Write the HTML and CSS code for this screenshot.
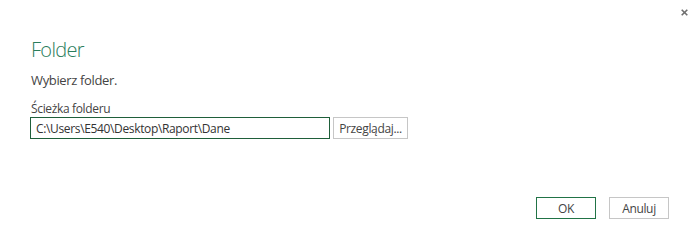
FILE: index.html
```html
<!DOCTYPE html>
<html lang="pl">
<head>
<meta charset="utf-8">
<title>Folder</title>
<link rel="stylesheet" href="styles.css">
</head>
<body>
<div class="dialog">
  <button class="close" aria-label="Zamknij">
    <svg width="7" height="7" viewBox="0 0 7 7"><path d="M0.7 0.7 L6.3 6.3 M6.3 0.7 L0.7 6.3" stroke="#6e6e6e" stroke-width="1.6" fill="none"/></svg>
  </button>
  <h1 class="title">Folder</h1>
  <p class="subtitle">Wybierz folder.</p>
  <label class="label" for="path">Ścieżka folderu</label>
  <div class="row">
    <input id="path" class="path" type="text" value="C:\Users\E540\Desktop\Raport\Dane">
    <button class="btn browse">Przeglądaj...</button>
  </div>
  <div class="footer">
    <button class="btn ok">OK</button>
    <button class="btn">Anuluj</button>
  </div>
</div>
</body>
</html>
```

FILE: styles.css
```css
html, body {
  margin: 0;
  padding: 0;
  background: #ffffff;
}
.dialog {
  position: relative;
  width: 700px;
  height: 250px;
  box-sizing: border-box;
  padding: 0 31px 31px 30px;
  display: flex;
  flex-direction: column;
  font-family: "Open Sans", "Noto Sans", sans-serif;
  color: #444444;
}
.close {
  position: absolute;
  top: 8px;
  right: 11px;
  width: 9px;
  height: 9px;
  padding: 1px;
  border: 0;
  background: transparent;
  display: flex;
  align-items: center;
  justify-content: center;
}
.title {
  margin: 37px 0 0 1px;
  font-size: 20px;
  line-height: 26px;
  font-weight: 300;
  letter-spacing: -0.7px;
  color: #2a7d5c;
}
.subtitle {
  margin: 8px 0 0 1px;
  font-size: 13px;
  line-height: 18px;
  letter-spacing: -0.35px;
  color: #444444;
}
.label {
  margin: 12px 0 0 1px;
  font-size: 12px;
  line-height: 16px;
  letter-spacing: -0.35px;
  color: #444444;
}
.row {
  margin-top: 0;
  display: flex;
  gap: 3px;
}
.path {
  width: 300px;
  height: 22px;
  box-sizing: border-box;
  border: 1px solid #1f5f3a;
  padding: 0 5px;
  font-family: inherit;
  font-size: 12px;
  letter-spacing: -0.35px;
  color: #333333;
  outline: none;
}
.btn {
  height: 22px;
  box-sizing: border-box;
  border: 1px solid #c6c6c6;
  background: #ffffff;
  font-family: inherit;
  font-size: 12px;
  letter-spacing: -0.35px;
  color: #444444;
  padding: 0;
}
.browse {
  width: 75px;
}
.footer {
  margin-top: auto;
  display: flex;
  justify-content: flex-end;
  gap: 13px;
}
.footer .btn {
  width: 60px;
  height: 22px;
}
.ok {
  border-color: #217346;
}
```
